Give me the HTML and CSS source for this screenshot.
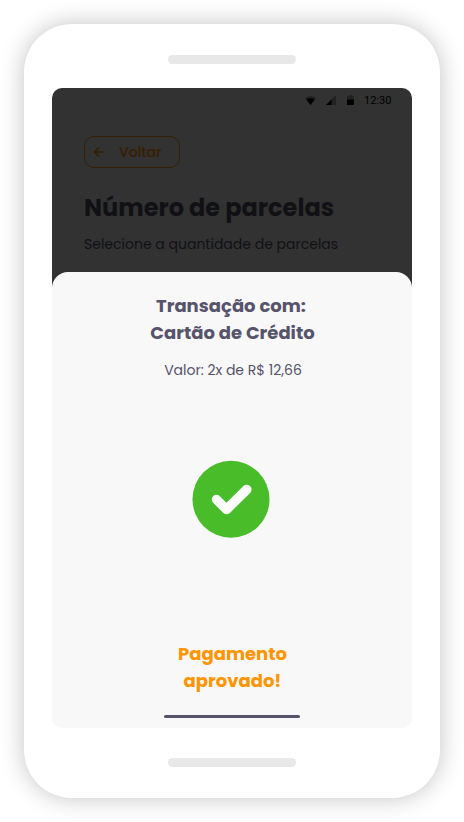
FILE: index.html
```html
<!DOCTYPE html>
<html lang="pt-BR">
<head>
<meta charset="utf-8">
<title>Pagamento</title>
<link rel="stylesheet" href="styles.css">
</head>
<body>
<main class="phone">
  <div class="speaker"></div>
  <div class="screen">
    <header class="backdrop">
      <div class="status">
        <svg class="status-icons" width="52" height="12" viewBox="0 0 52 12">
          <path d="M0 3Q5.5-.5 11 3L5.5 10Z" fill="#1f1f1f"/>
          <path d="M1.3 4.5Q5.5 2 9.7 4.5L5.5 10Z" fill="#000"/>
          <path d="M31 0V10H21Z" fill="#222"/>
          <path d="M26.500 4.500V10H21Z" fill="#000"/>
          <path d="M43 1H44V0H47V1H49V5H42V1Z" fill="#222"/>
          <path d="M42 4.500H49V10H42Z" fill="#000"/>
        </svg>
        <span class="clock">12:30</span>
      </div>
      <button class="back">
        <svg width="12" height="10" viewBox="0 0 12 10" fill="none" stroke="currentColor" stroke-width="1.400" stroke-linecap="round" stroke-linejoin="round"><path d="M5.500 1L1.500 5L5.500 9M1.500 5H11"/></svg>
        <span>Voltar</span>
      </button>
      <h1>Número de parcelas</h1>
      <p class="hint">Selecione a quantidade de parcelas</p>
    </header>
    <section class="sheet">
      <h2><span class="title-lead">Transação com:</span><span class="title-method">Cartão de Crédito</span></h2>
      <p class="value">Valor: 2x de R$ 12,66</p>
      <svg class="check" width="78" height="78" viewBox="0 0 78 78">
        <circle cx="39" cy="39.300" r="38.500" fill="#48bc29"/>
        <path d="M24.500 39.500L34.500 49.500L54.800 29.500" fill="none" stroke="#fff" stroke-width="9.500" stroke-linecap="round" stroke-linejoin="round"/>
      </svg>
      <p class="result"><span>Pagamento</span><span>aprovado!</span></p>
      <div class="handle"></div>
    </section>
  </div>
  <div class="speaker"></div>
</main>
</body>
</html>
```
FILE: styles.css
```css
* { box-sizing: border-box; margin: 0; padding: 0; }
body { background: #fff; padding: 24px; font-family: Poppins, Inter, sans-serif; height: 822px; overflow: hidden; }
.phone { width: 416px; height: 774px; background: #fff; border-radius: 48px; box-shadow: 0 0 24px rgba(0,0,0,.24); padding: 31px 28px; display: flex; flex-direction: column; align-items: center; }
.speaker { width: 128px; height: 9px; border-radius: 5px; background: #e8e8e8; flex: none; }
.screen { margin: 24px 0 30px; flex: none; width: 360px; height: 640px; border-radius: 10px; background: linear-gradient(#323232 50%, #f8f8f8 50%); overflow: hidden; display: flex; flex-direction: column; }
.backdrop { height: 184px; padding: 0 32px; color: #111115; }
.status { height: 24px; margin-right: -12px; display: flex; justify-content: flex-end; align-items: center; gap: 7px; color: #000; }
.status-icons { margin-top: 2px; }
.clock { font: 11px/24px Roboto, sans-serif; width: 28px; margin-top: 1px; }
.back { margin-top: 24px; width: 96px; height: 32px; border: 1px solid #361f00; border-radius: 10px; background: transparent; color: #361f00; display: flex; align-items: center; gap: 14px; padding: 0 8px; font: 500 14px/20px Poppins, Inter, sans-serif; }
h1 { margin-top: 21px; font-size: 24px; line-height: 38px; font-weight: 700; white-space: nowrap; }
.hint { margin-top: 6px; font-size: 14px; line-height: 22px; white-space: nowrap; }
.sheet { flex: 1; background: #f8f8f8; border-radius: 16px 16px 0 0; color: #56536b; display: flex; flex-direction: column; align-items: center; text-align: center; padding-top: 20px; }
h2, .result { font-size: 18px; line-height: 27px; font-weight: 700; }
h2 span, .result span { display: block; }
.title-lead { margin-right: 2px; }
.title-method { margin-left: 1px; }
.value { margin: 14px 0 0 2px; font-size: 14px; line-height: 20px; }
.check { margin: 80px 3px 0 0; flex: none; }
.result { color: #ff9500; margin: 102px 0 0 1px; }
.handle { width: 136px; height: 3px; border-radius: 2px; background: #56536b; margin-top: 21px; }
```
